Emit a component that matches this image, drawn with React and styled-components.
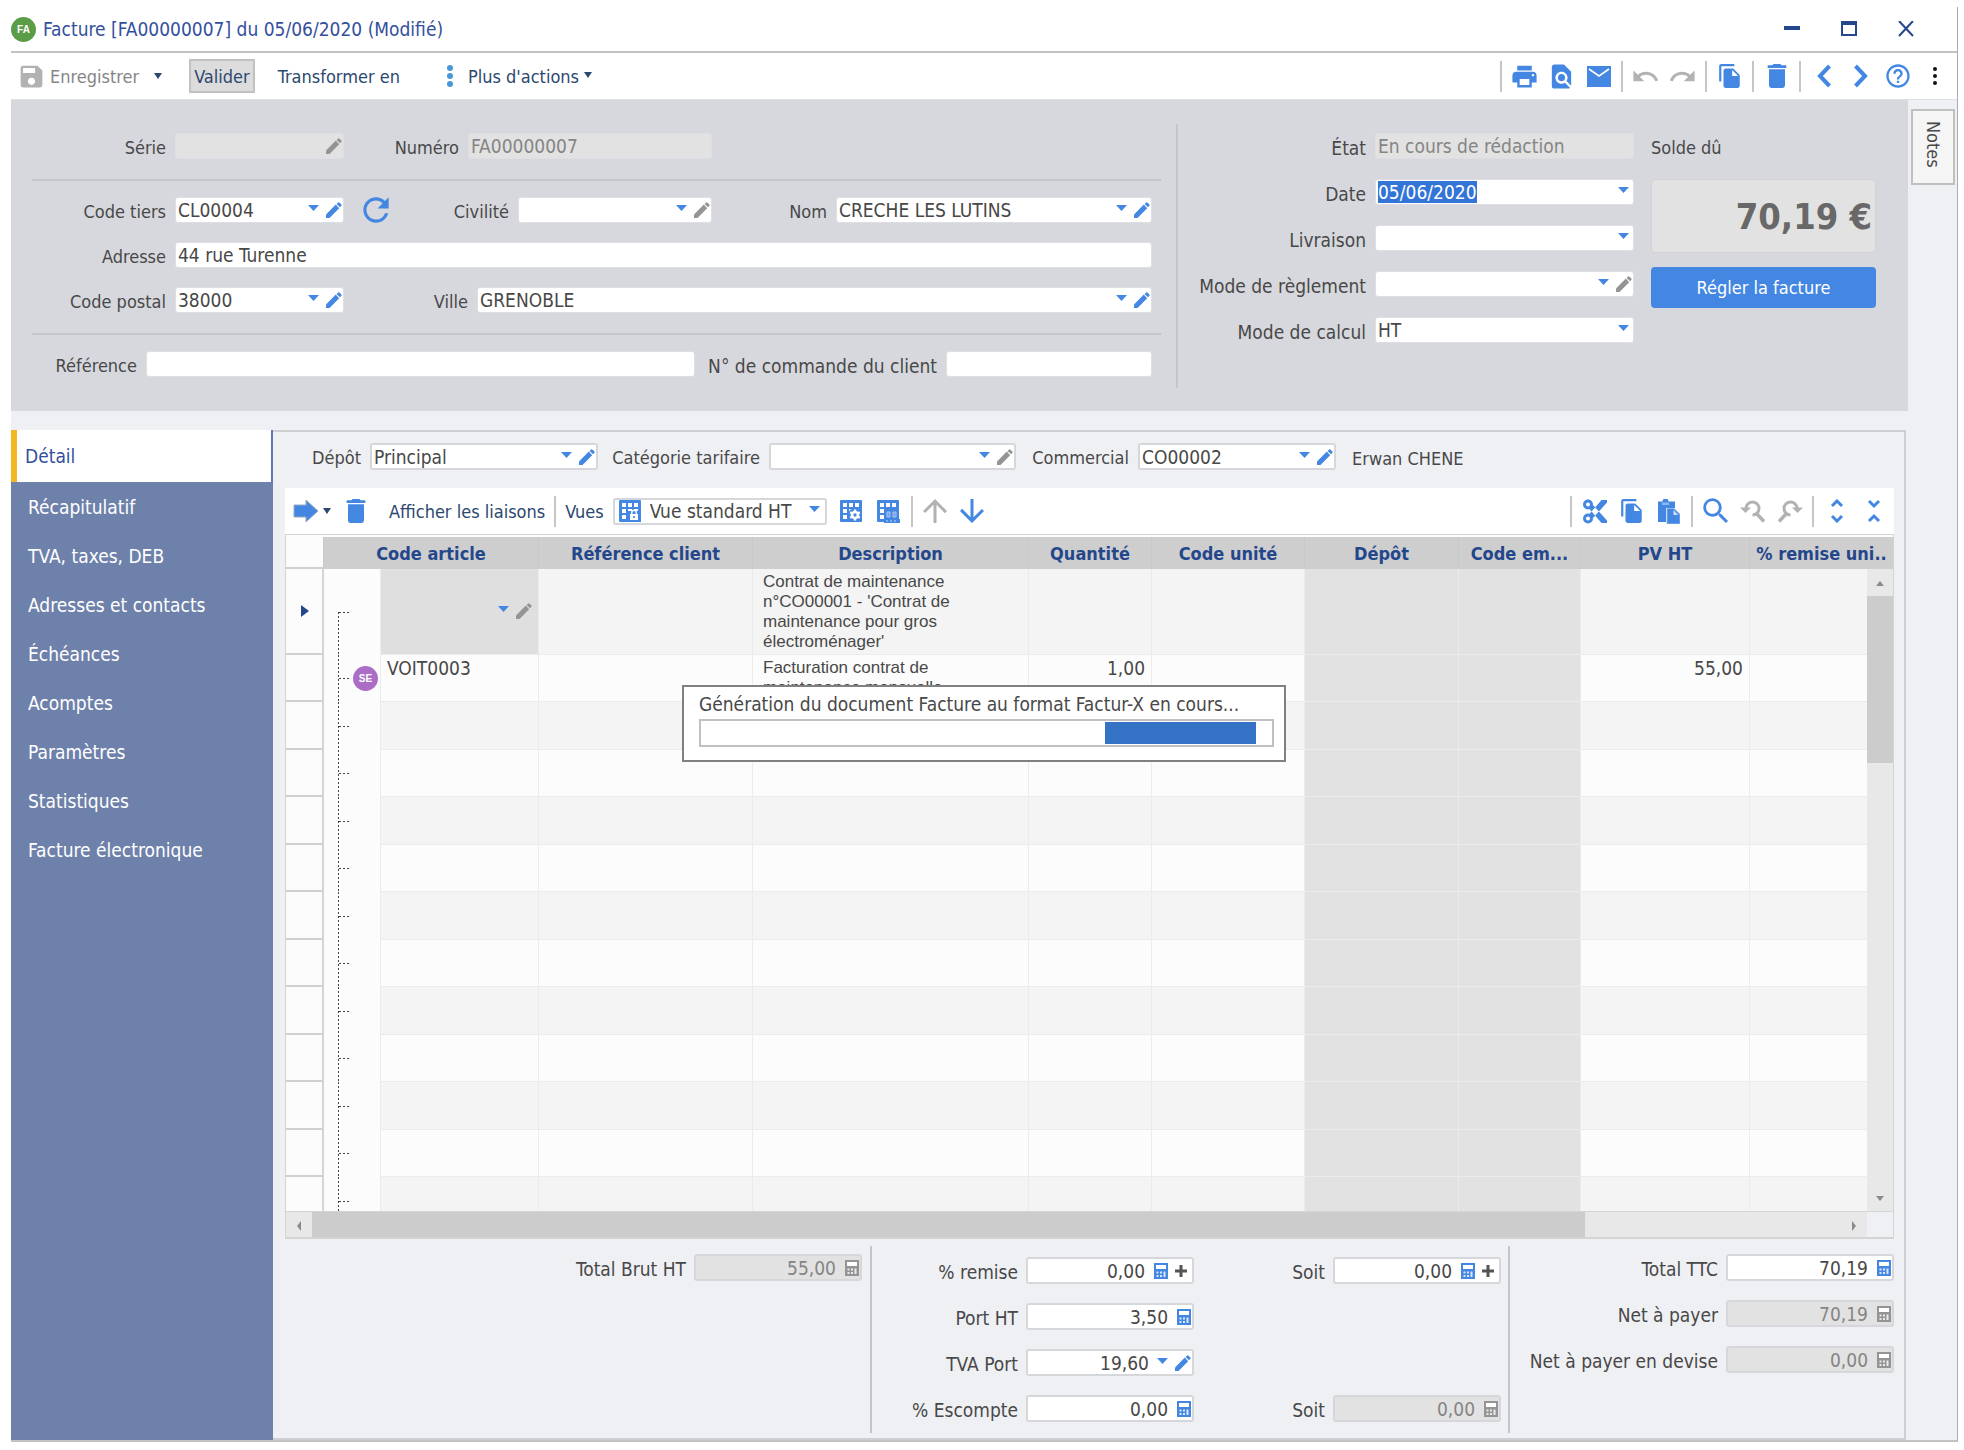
import React, { useEffect, useId, useRef } from 'react';
import styled, { createGlobalStyle, css } from 'styled-components';
import {
  MdArrowDownward,
  MdArrowUpward,
  MdDelete,
  MdFileCopy,
  MdFindInPage,
  MdHelpOutline,
  MdPrint,
  MdRedo,
  MdRefresh,
  MdSave,
  MdSearch,
  MdUndo,
} from 'react-icons/md';

const c = {
  blue: '#4487e2',
  navy: '#24478c',
  ink: '#2b4870',
  text: '#484848',
  muted: '#858585',
  off: '#b2b2b2',
  line: '#c4c5c8',
  panel: '#d7d8dd',
  page: '#eff0f4',
  disabled: '#e2e2e2',
  side: '#6e81aa',
};

const Global = createGlobalStyle`
  *, *::before, *::after { box-sizing: border-box; }
  body { margin: 0; background: #fff; }
  body, input, select, button {
    font-family: "DejaVu Sans Condensed", "DejaVu Sans", Tahoma, sans-serif;
    font-size: 18px;
    color: ${c.text};
  }
  button { border: 0; padding: 0; background: none; cursor: pointer; }
  svg { display: block; flex: none; }
`;

/* ---------- window frame ---------- */

const Screen = styled.div`
  display: flex;
  height: 100vh;
  min-height: 1100px;
  min-width: 1700px;
  padding: 7px 6px 8px 11px;
`;

const Frame = styled.main`
  position: relative;
  flex: 1;
  min-width: 0;
  display: flex;
  flex-direction: column;
  border-right: 1px solid #a9abb2;
  border-bottom: 2px solid #c2c3c6;
`;

const TitleBar = styled.header`
  display: flex;
  align-items: center;
  height: 46px;
  padding-right: 34px;
  border-bottom: 2px solid #c2c2c2;
`;

const Title = styled.h1`
  flex: 1;
  margin: 0 0 0 7px;
  font-size: 19px;
  font-weight: normal;
  color: #33509e;
`;

const Badge = styled.span`
  display: flex;
  align-items: center;
  justify-content: center;
  width: 25px;
  height: 25px;
  border-radius: 50%;
  background: ${(p) => p.$tone};
  color: #fff;
  font: bold 10px "Liberation Sans", Arial, sans-serif;
`;

const WindowButton = styled.button`
  display: flex;
  align-items: center;
  justify-content: center;
  width: 57px;
  height: 40px;
  &:last-child { width: 34px; margin-left: 12px; }
`;

const Toolbar = styled.div`
  display: flex;
  align-items: center;
  height: 47px;
  padding: 0 4px 0 6px;
  border-bottom: 1px solid #e0e1e4;
`;

const ToolText = styled.button`
  display: flex;
  align-items: center;
  gap: ${(p) => p.$gap || 7}px;
  height: 34px;
  margin-left: ${(p) => p.$before || 0}px;
  margin-right: ${(p) => p.$after || 0}px;
  color: ${(p) => (p.$off ? c.muted : c.ink)};
  white-space: nowrap;
  ${(p) =>
    p.$pressed &&
    css`
      padding: 0 3px;
      border: 2px solid #c1c1c1;
      background: #dcdcdc;
    `}
`;

const Grow = styled.div`
  flex: 1;
`;

const IconButton = styled.button`
  display: flex;
  align-items: center;
  justify-content: center;
  width: 37px;
  height: 34px;
  color: ${(p) => (p.$off ? c.off : c.blue)};
`;

const Separator = styled.span`
  width: 2px;
  height: 31px;
  margin: 0 4px;
  background: #c6c6c6;
`;

/* ---------- form pieces ---------- */

const Label = styled.label`
  flex: none;
  width: ${(p) => (p.$w ? `${p.$w}px` : 'auto')};
  padding-top: 3px;
  font-size: ${(p) => (p.$big ? 19 : 18)}px;
  line-height: 24px;
  text-align: right;
  white-space: nowrap;
`;

const Box = styled.span`
  display: flex;
  align-items: center;
  flex: ${(p) => (p.$w ? 'none' : '1')};
  width: ${(p) => (p.$w ? `${p.$w}px` : 'auto')};
  min-width: 0;
  height: ${(p) => (p.$outlined ? 27 : 26)}px;
  padding-right: 1px;
  border: ${(p) => (p.$outlined ? 2 : 1)}px solid ${(p) => (p.$outlined ? '#d6d7da' : '#dedfe2')};
  border-radius: 3px;
  background: ${(p) => (p.$off ? c.disabled : '#fff')};
`;

const control = css`
  flex: 1;
  min-width: 0;
  width: 0;
  height: 22px;
  padding: 0 0 0 2px;
  border: 0;
  outline: 0;
  background: transparent;
  font-size: 19px;
  line-height: 22px;
  color: ${(p) => (p.disabled ? c.muted : c.text)};
  opacity: 1;
`;

const Input = styled.input`
  ${control}
  text-align: ${(p) => (p.$num ? 'right' : 'left')};
  &::selection { background: #3375d7; color: #fff; }
`;

const Select = styled.select`
  ${control}
  appearance: none;
`;

const MiniButton = styled.button`
  display: flex;
  align-items: center;
  justify-content: center;
  width: 17px;
  height: 20px;
  margin-left: 3px;
  color: ${(p) => (p.$off ? '#949494' : c.blue)};
`;

const CalcButton = styled(MiniButton)`
  justify-content: flex-end;
  width: 20px;
`;

const Caret = ({ color = c.blue, w = 11, h = 6 }) => (
  <svg width={w} height={h} viewBox="0 0 10 6" preserveAspectRatio="none" fill={color} aria-hidden="true">
    <path d="M0 0h10L5 6z" />
  </svg>
);

const CaretHolder = styled.span`
  display: flex;
  justify-content: center;
  width: 18px;
  margin-left: ${(p) => (p.$num ? 4 : 0)}px;
  padding-bottom: 4px;
`;

const SmallCaret = styled.span`
  display: flex;
  padding: 0 0 2px 5px;
`;

const Pencil = () => (
  <svg width="16" height="16" viewBox="0 0 16 16" fill="currentColor">
    <path d="M0 16v-3.500L9.800 2.600l3.400 3.600L3.500 16z" />
    <path d="M10.600 1.900l1.200-1.200q.9-.9 1.800 0L15.200 2.300q.9.900 0 1.800L14 5.300z" />
  </svg>
);

const Calculator = () => (
  <svg width="14" height="16" viewBox="0 0 14 16">
    <path d="M0 0h14v16H0z" fill="currentColor" />
    <path d="M2 2h10v4H2z" fill="#fff" />
    <path d="M2.500 8.500h2v2h-2zM6 8.500h2v2H6zM2.500 12h2v2h-2zM6 12h2v2H6zM9.500 8.500h2V14h-2z" fill="#fff" opacity="0.800" />
  </svg>
);

const Plus = () => (
  <svg width="14" height="14" viewBox="0 0 14 14" fill="none" stroke="#555" strokeWidth="3">
    <path d="M7 1v12M1 7h12" />
  </svg>
);

/* A labelled control: text box, list, or amount, with its little buttons. */
function Field({ label, lw, w, big, value = '', list, date, edit, editOff, calc, plus, caret, off, outlined }) {
  const id = useId();
  const ref = useRef(null);
  useEffect(() => {
    if (date && ref.current) {
      ref.current.focus();
      ref.current.select();
    }
  }, [date]);
  return (
    <>
      <Label htmlFor={id} $w={lw} $big={big}>
        {label}
      </Label>
      <Box $w={w} $off={off} $outlined={outlined}>
        {list ? (
          <Select id={id} disabled={off} defaultValue={value}>
            <option value={value}>{value}</option>
          </Select>
        ) : (
          <Input id={id} ref={ref} disabled={off} defaultValue={value} $num={calc || caret} />
        )}
        {(list || date || caret) && !off && (
          <CaretHolder $num={caret}>
            <Caret />
          </CaretHolder>
        )}
        {edit && (
          <MiniButton $off={editOff} aria-label={`Modifier ${label}`}>
            <Pencil />
          </MiniButton>
        )}
        {calc && (
          <CalcButton $off={off} aria-label={`Calculer ${label}`}>
            <Calculator />
          </CalcButton>
        )}
        {plus && (
          <PlusButton aria-label={`Ajouter ${label}`}>
            <Plus />
          </PlusButton>
        )}
      </Box>
    </>
  );
}

const PlusButton = styled(MiniButton)`
  width: 20px;
`;

/* ---------- document header ---------- */

const Content = styled.div`
  flex: 1;
  min-height: 0;
  display: flex;
  background: ${c.page};
`;

const Main = styled.div`
  flex: 1;
  min-width: 0;
  display: flex;
  flex-direction: column;
  gap: 19px;
`;

const Notes = styled.aside`
  width: 49px;
  padding: 9px 2px 0 3px;
`;

const NotesTab = styled.button`
  display: flex;
  align-items: center;
  width: 44px;
  height: 76px;
  padding: 10px 8px;
  border: 2px solid #c0c0c0;
  background: #f5f5f5;
  writing-mode: vertical-rl;
`;

const Head = styled.section`
  display: flex;
  padding: 24px 32px 23px 21px;
  background: ${c.panel};
`;

const Identity = styled.div`
  flex: 1;
  min-width: 0;
  padding: 9px 0 11px;
`;

const Rule = styled.hr`
  height: 2px;
  margin: 20px 0 16px;
  border: 0;
  background: ${c.line};
`;

const Rows = styled.div`
  display: flex;
  flex-direction: column;
  gap: 19px;
  padding-right: 9px;
`;

const Row = styled.div`
  display: flex;
  align-items: center;
  gap: 9px;
  height: 26px;
`;

const Refresh = styled(IconButton)`
  width: 46px;
`;

const Divider = styled.div`
  flex: none;
  width: 2px;
  margin-left: ${(p) => p.$before || 0}px;
  background: ${c.line};
`;

const Status = styled.div`
  display: flex;
  gap: 17px;
  padding-top: 9px;
`;

const StatusRows = styled.div`
  display: flex;
  flex-direction: column;
  gap: 20px;
  width: 456px;
`;

const Balance = styled.div`
  width: 225px;
  display: flex;
  flex-direction: column;
`;

const BalanceLabel = styled.span`
  height: 46px;
  padding-top: 3px;
  line-height: 24px;
`;

const Amount = styled.output`
  display: flex;
  align-items: center;
  justify-content: flex-end;
  height: 74px;
  padding-right: 3px;
  border: 1px solid #d2d2d4;
  border-radius: 4px;
  background: ${c.disabled};
  font-size: 36px;
  font-weight: bold;
  color: #686868;
`;

const PayButton = styled.button`
  height: 41px;
  margin-top: 14px;
  border-radius: 4px;
  background: ${c.blue};
  color: #fff;
`;

/* ---------- body ---------- */

const Body = styled.div`
  flex: 1;
  min-height: 0;
  display: flex;
  margin-right: 2px;
`;

const Side = styled.nav`
  flex: none;
  width: 262px;
  background: ${c.side};
`;

const SideLink = styled.a`
  display: flex;
  align-items: center;
  height: 49px;
  padding-left: 17px;
  font-size: 19px;
  color: #fff;
  text-decoration: none;
  ${(p) =>
    p.$active &&
    css`
      height: 52px;
      padding-left: 8px;
      border-left: 6px solid #f0b823;
      border-right: 2px solid #5d78b3;
      background: #fff;
      color: #33509e;
    `}
`;

const Panel = styled.section`
  flex: 1;
  min-width: 0;
  display: flex;
  flex-direction: column;
  padding: 11px 10px 5px 12px;
  border: 2px solid #cdced1;
  border-left: 0;
`;

const Filters = styled(Row)`
  height: 27px;
  margin-bottom: 18px;
`;

const Agent = styled.span`
  padding: 3px 0 0 7px;
`;

const GridTools = styled.div`
  display: flex;
  align-items: center;
  height: 46px;
  padding: 0 2px 0 8px;
  background: #fff;
`;

const LinkButton = styled(ToolText)`
  margin: 0 5px 0 15px;
`;

const ViewLabel = styled.label`
  margin-left: 5px;
  color: ${c.ink};
`;

const ViewBox = styled(Box)`
  gap: 6px;
  margin: 0 6px 0 9px;
  padding-left: 4px;
`;

const Sheet = styled.div`
  position: relative;
  flex: 1;
  min-height: 200px;
  overflow: hidden;
  padding-top: 2px;
  border: 1px solid #d3d4d6;
  border-bottom: 0;
  background: #fcfcfc;
`;

const Table = styled.table`
  width: 100%;
  table-layout: fixed;
  border-collapse: separate;
  border-spacing: 0;
`;

const Th = styled.th`
  height: 32px;
  padding: 0 4px;
  overflow: hidden;
  border-right: 1px solid #c9c9c9;
  background: ${(p) => (p.$blank ? '#fcfcfc' : '#cecece')};
  border-bottom: ${(p) => (p.$blank ? '2px solid #cfd0d2' : '0')};
  color: ${c.navy};
  font-weight: bold;
  white-space: nowrap;
`;

const Tr = styled.tr`
  & > td {
    height: 47px;
    background: #f4f4f4;
  }
  &:nth-child(odd) > td { height: 48px; }
  &:nth-child(even) > td {
    background: #fcfcfc;
  }
  &:first-child > td { height: 86px; }
  &:nth-child(n) > td.shade { background: ${c.disabled}; }
  &:first-child > td.current { background: #dfdfdf; }
`;

const Td = styled.td`
  padding: 2px 6px;
  overflow: hidden;
  vertical-align: top;
  border-right: 1px solid #ececec;
  border-bottom: 1px solid #ececec;
  font-size: 19px;
  line-height: 22px;
  text-align: ${(p) => (p.$num ? 'right' : 'left')};
`;

const Description = styled(Td)`
  padding: 3px 10px 0;
  font: 17px/20px "Liberation Sans", Arial, sans-serif;
`;

const Handle = styled(Td)`
  padding: 0 0 0 15px;
  vertical-align: middle;
  border-right: 2px solid #d4d5d8;
  border-bottom: 2px solid #cfd0d2;
  ${Tr}:nth-child(n) > & { background: #fcfcfc; }
`;

const Tree = styled(Td)`
  padding: 0 0 0 29px;
  vertical-align: middle;
  border-bottom: 0;
  ${Tr}:nth-child(n) > & {
    background:
      repeating-linear-gradient(to right, #444 0 2px, transparent 2px 4px) 15px 50% / 12px 1px no-repeat,
      repeating-linear-gradient(to bottom, #444 0 2px, transparent 2px 4px) 14px 100% / 1px ${(p) => (p.$first ? '50%' : '100%')} no-repeat,
      #fcfcfc;
  }
`;

const CellTools = styled.div`
  display: flex;
  align-items: center;
  justify-content: flex-end;
  height: 80px;
`;

const VScroll = styled.div`
  position: absolute;
  top: 34px;
  right: 0;
  bottom: 0;
  display: flex;
  flex-direction: column;
  width: 26px;
  background: #e8e8e8;
`;

const HScroll = styled.div`
  display: flex;
  flex: none;
  height: 28px;
  border: 1px solid #d3d4d6;
  border-bottom-width: 2px;
  padding-right: 26px;
  background: linear-gradient(#e8e8e8, #e8e8e8) content-box;
`;

const ScrollButton = styled.button`
  display: flex;
  align-items: center;
  justify-content: center;
  width: 26px;
  height: 27px;
`;

const Thumb = styled.div`
  flex: 0 0 ${(p) => p.$size};
  background: #cccccc;
`;

/* ---------- totals ---------- */

const Totals = styled.section`
  display: flex;
  margin-top: 7px;
`;

const TotalsPart = styled.div`
  display: flex;
  flex-direction: column;
  flex: ${(p) => (p.$w ? 'none' : '1')};
  width: ${(p) => (p.$w ? `${p.$w}px` : 'auto')};
  gap: 19px;
  padding: ${(p) => p.$top}px ${(p) => p.$end || 0}px ${(p) => p.$top}px 0;
`;

const TotalsRow = styled(Row)`
  justify-content: ${(p) => (p.$start ? 'flex-start' : 'flex-end')};
  gap: 8px;
  height: 27px;
`;

/* ---------- progress box ---------- */

const Progress = styled.div`
  position: absolute;
  inset: 0;
  margin: auto;
  width: 604px;
  height: 77px;
  padding: 6px 10px 0 15px;
  border: 2px solid #808080;
  background: #fff;
`;

const ProgressText = styled.p`
  margin: 0 0 4px;
  font-size: 19px;
  line-height: 22px;
  white-space: nowrap;
`;

const Track = styled.div`
  height: 28px;
  padding: 1px;
  border: 2px solid #c0c0c0;
`;

const Chunk = styled.div`
  width: 151px;
  height: 22px;
  margin-left: 70.8%;
  background: #3472c6;
`;

/* ---------- drawings ---------- */

const Stroke = ({ w = 24, h = 24, d, sw = 4 }) => (
  <svg width={w} height={h} viewBox={`0 0 ${w} ${h}`} fill="none" stroke="currentColor" strokeWidth={sw}>
    <path d={d} />
  </svg>
);

const Dots = ({ color, r = 2, step = 8 }) => (
  <svg width="6" height="22" viewBox="0 0 6 22" fill={color}>
    <circle cx="3" cy={11 - step} r={r} />
    <circle cx="3" cy="11" r={r} />
    <circle cx="3" cy={11 + step} r={r} />
  </svg>
);

const gridCells = [3, 9, 15].flatMap((y) => [3, 9, 15].map((x) => [x, y]));

const GridIcon = ({ kind }) => (
  <svg width="23" height="23" viewBox="0 0 23 23">
    <rect width="22" height="22" rx="1" fill={c.blue} />
    {gridCells.map(([x, y]) => (
      <rect key={`${x}-${y}`} x={x} y={y} width="4" height="4" fill="#fff" />
    ))}
    {kind === 'lock' && (
      <g>
        <path d="M9 11h13v11H9z" fill={c.blue} />
        <rect x="11" y="14" width="8" height="6" fill="#fff" />
        <path d="M12.800 14v-1.500a2.200 2.200 0 0 1 4.400 0V14" fill="none" stroke="#fff" strokeWidth="1.400" />
        <circle cx="15" cy="17" r="1.100" fill={c.blue} />
      </g>
    )}
    {kind === 'gear' && (
      <g>
        <circle cx="15" cy="15" r="7" fill={c.blue} />
        <circle cx="15" cy="15" r="3" fill="none" stroke="#fff" strokeWidth="2.600" />
        <path
          d="M15 9.500v2M15 18.500v2M10.200 12.200l1.800 1M18 16.800l1.800 1M10.200 17.800l1.800-1M18 13.200l1.800-1"
          stroke="#fff"
          strokeWidth="2.400"
        />
      </g>
    )}
    {kind === 'find' && (
      <g>
        <rect x="8" y="9" width="14" height="13" fill={c.blue} />
        <path d="M10 12v5h3v-5zM16 12v5h3v-5z" fill="#6fa3ea" stroke="#a9c8f3" strokeWidth="1" />
        <path d="M7 19h16v4H7z" fill={c.blue} />
        <path d="M10 20v2M14 20v2M18 20v2" stroke="#a9c8f3" strokeWidth="1.200" />
      </g>
    )}
  </svg>
);

const Mail = () => (
  <svg width="24" height="21" viewBox="0 0 24 21">
    <path d="M0 0h24v21H0z" fill="currentColor" />
    <path d="M2 3l10 7 10-7" fill="none" stroke="#fff" strokeWidth="1.600" />
  </svg>
);

const Scissors = () => (
  <svg width="24" height="25" viewBox="0 0 24 25" fill="currentColor">
    <circle cx="5" cy="5.500" r="3.500" fill="none" stroke="currentColor" strokeWidth="3" />
    <circle cx="5" cy="19.500" r="3.500" fill="none" stroke="currentColor" strokeWidth="3" />
    <path d="M6 9.500L10 6l14 15.500V24h-5.500zM6 15.500l4 3.500L24 3.500V1h-5.500z" />
  </svg>
);

const Paste = () => (
  <svg width="22" height="25" viewBox="0 0 22 25">
    <path d="M0 2.500h4.500a3 3 0 0 1 6 0H17V9H8v14H0z" fill={c.blue} />
    <path d="M4 3.500h7V6H4z" fill="#8db6ee" />
    <path d="M9 9.500h7l6 6V25H9z" fill={c.blue} stroke="#8db6ee" strokeWidth="1" />
    <path d="M15.500 11v5H20z" fill="#cfe0f8" />
  </svg>
);

const ArrowBlock = () => (
  <svg width="26" height="24" viewBox="0 0 26 24">
    <path d="M1 6h12V1l12 11-12 11v-5H1z" fill={c.blue} stroke="#9ba9bf" strokeWidth="1" />
  </svg>
);

const FindTurn = ({ flip }) => (
  <svg width="26" height="26" viewBox="0 0 26 26" fill="none" stroke="currentColor" strokeWidth="3">
    <g transform={flip ? 'translate(26 0) scale(-1 1)' : undefined}>
      <path d="M6 10a6.500 6.500 0 1 1 6.500 7" />
      <path d="M16.500 15.500l7.500 8" strokeWidth="3.500" />
      <path d="M0 9.500h11L5.500 15z" fill="currentColor" stroke="none" />
    </g>
  </svg>
);

const Triangle = ({ d, color = '#8a8a8a' }) => (
  <svg width="8" height="12" viewBox="0 0 8 12" fill={color}>
    <path d={d} />
  </svg>
);

/* ---------- data ---------- */

const menu = [
  'Détail',
  'Récapitulatif',
  'TVA, taxes, DEB',
  'Adresses et contacts',
  'Échéances',
  'Acomptes',
  'Paramètres',
  'Statistiques',
  'Facture électronique',
];

const widths = [38, 57, 158, 214, 276, 123, 153, 154, 122, 169, 144];

const headings = [
  'Référence client',
  'Description',
  'Quantité',
  'Code unité',
  'Dépôt',
  'Code em...',
  'PV HT',
  '% remise uni..',
];

const lines = [
  { text: "Contrat de maintenance n°CO00001 - 'Contrat de maintenance pour gros électroménager'" },
  { code: 'VOIT0003', kind: 'SE', text: 'Facturation contrat de maintenance mensuelle', qty: '1,00', price: '55,00' },
  ...Array.from({ length: 11 }, () => ({})),
];

/* ---------- sections ---------- */

function MainToolbar() {
  return (
    <Toolbar>
      <ToolText $off $gap={4} disabled>
        <MdSave size={29} color={c.off} />
        Enregistrer
      </ToolText>
      <IconButton aria-label="Options d'enregistrement">
        <Caret color={c.ink} w={8} h={6} />
      </IconButton>
      <ToolText $pressed $before={13} $after={23}>Valider</ToolText>
      <ToolText $after={47}>Transformer en</ToolText>
      <ToolText $gap={15}>
        <Dots color="#4a96d8" r={3} />
        Plus d'actions
      </ToolText>
      <SmallCaret>
        <Caret color={c.ink} w={8} h={6} />
      </SmallCaret>
      <Grow />
      <Separator />
      <IconButton aria-label="Imprimer"><MdPrint size={29} /></IconButton>
      <IconButton aria-label="Aperçu"><MdFindInPage size={29} /></IconButton>
      <IconButton aria-label="Envoyer"><Mail /></IconButton>
      <Separator />
      <IconButton $off aria-label="Annuler"><MdUndo size={29} /></IconButton>
      <IconButton $off aria-label="Rétablir"><MdRedo size={29} /></IconButton>
      <Separator />
      <IconButton aria-label="Dupliquer"><MdFileCopy size={26} /></IconButton>
      <Separator />
      <IconButton aria-label="Supprimer"><MdDelete size={32} /></IconButton>
      <Separator />
      <IconButton aria-label="Précédent"><Stroke w={16} d="M13.500 2L4 12l9.500 10" /></IconButton>
      <IconButton aria-label="Suivant"><Stroke w={16} d="M2.500 2L12 12 2.500 22" /></IconButton>
      <IconButton aria-label="Aide"><MdHelpOutline size={28} /></IconButton>
      <IconButton aria-label="Plus"><Dots color="#111" step={7} /></IconButton>
    </Toolbar>
  );
}

function DocumentHead() {
  return (
    <Head>
      <Identity>
        <Rows>
          <Row>
            <Field label="Série" lw={134} w={169} off edit editOff />
            <Field label="Numéro" lw={106} w={244} value="FA00000007" off />
          </Row>
        </Rows>
        <Rule />
        <Rows>
          <Row>
            <Field label="Code tiers" lw={134} w={169} value="CL00004" list edit />
            <Refresh aria-label="Actualiser"><MdRefresh size={38} /></Refresh>
            <Field label="Civilité" lw={101} w={194} list edit editOff />
            <Field label="Nom" lw={106} value="CRECHE LES LUTINS" list edit />
          </Row>
          <Row>
            <Field label="Adresse" lw={134} value="44 rue Turenne" />
          </Row>
          <Row>
            <Field label="Code postal" lw={134} w={169} value="38000" list edit />
            <Field label="Ville" lw={115} value="GRENOBLE" list edit />
          </Row>
        </Rows>
        <Rule />
        <Rows>
          <Row>
            <Field label="Référence" lw={105} />
            <Field label="N° de commande du client" big lw={233} w={206} />
          </Row>
        </Rows>
      </Identity>
      <Divider $before={15} />
      <Status>
        <StatusRows>
          <Row><Field label="État" big lw={188} value="En cours de rédaction" list off /></Row>
          <Row><Field label="Date" big lw={188} value="05/06/2020" date /></Row>
          <Row><Field label="Livraison" big lw={188} list /></Row>
          <Row><Field label="Mode de règlement" big lw={188} list edit editOff /></Row>
          <Row><Field label="Mode de calcul" big lw={188} value="HT" list /></Row>
        </StatusRows>
        <Balance>
          <BalanceLabel>Solde dû</BalanceLabel>
          <Amount>70,19 €</Amount>
          <PayButton>Régler la facture</PayButton>
        </Balance>
      </Status>
    </Head>
  );
}

function GridToolbar() {
  return (
    <GridTools>
      <ToolText $gap={4} $after={6} aria-label="Insérer">
        <ArrowBlock />
        <Caret color={c.ink} w={8} h={6} />
      </ToolText>
      <IconButton aria-label="Supprimer la ligne"><MdDelete size={32} /></IconButton>
      <LinkButton>Afficher les liaisons</LinkButton>
      <Separator />
      <ViewLabel htmlFor="view">Vues</ViewLabel>
      <ViewBox $w={214} $outlined>
        <GridIcon kind="lock" />
        <Select id="view" defaultValue="ht">
          <option value="ht">Vue standard HT</option>
        </Select>
        <CaretHolder><Caret /></CaretHolder>
      </ViewBox>
      <IconButton aria-label="Configurer la vue"><GridIcon kind="gear" /></IconButton>
      <IconButton aria-label="Rechercher une vue"><GridIcon kind="find" /></IconButton>
      <Separator />
      <IconButton $off aria-label="Monter"><MdArrowUpward size={36} /></IconButton>
      <IconButton aria-label="Descendre"><MdArrowDownward size={36} /></IconButton>
      <Grow />
      <Separator />
      <IconButton aria-label="Couper"><Scissors /></IconButton>
      <IconButton aria-label="Copier"><MdFileCopy size={26} /></IconButton>
      <IconButton aria-label="Coller"><Paste /></IconButton>
      <Separator />
      <IconButton aria-label="Rechercher"><MdSearch size={34} /></IconButton>
      <IconButton $off aria-label="Occurrence précédente"><FindTurn /></IconButton>
      <IconButton $off aria-label="Occurrence suivante"><FindTurn flip /></IconButton>
      <Separator />
      <IconButton aria-label="Déplier"><Stroke w={14} sw={3} d="M2 7l5-5 5 5M2 17l5 5 5-5" /></IconButton>
      <IconButton aria-label="Replier"><Stroke w={14} sw={3} d="M2 2l5 5 5-5M2 22l5-5 5 5" /></IconButton>
    </GridTools>
  );
}

function Lines() {
  return (
    <>
      <Sheet>
        <Table>
          <colgroup>
            {widths.map((w, i) => (
              <col key={i} width={w} />
            ))}
          </colgroup>
          <thead>
            <tr>
              <Th $blank />
              <Th colSpan={2}>Code article</Th>
              {headings.map((h) => (
                <Th key={h}>{h}</Th>
              ))}
            </tr>
          </thead>
          <tbody>
            {lines.map((l, i) => (
              <Tr key={i}>
                <Handle>{i === 0 && <Triangle d="M0 0l8 6-8 6z" color={c.navy} />}</Handle>
                <Tree $first={i === 0}>{l.kind && <Badge $tone="#ab6dc6">{l.kind}</Badge>}</Tree>
                <Td className={i === 0 ? 'current' : undefined}>
                  {i === 0 ? (
                    <CellTools>
                      <CaretHolder><Caret /></CaretHolder>
                      <MiniButton $off aria-label="Modifier l'article"><Pencil /></MiniButton>
                    </CellTools>
                  ) : (
                    l.code
                  )}
                </Td>
                <Td />
                <Description>{l.text}</Description>
                <Td $num>{l.qty}</Td>
                <Td />
                <Td className="shade" />
                <Td className="shade" />
                <Td $num>{l.price}</Td>
                <Td />
              </Tr>
            ))}
          </tbody>
        </Table>
        <VScroll>
          <ScrollButton aria-label="Défiler vers le haut"><Triangle d="M0 9h8L4 4z" /></ScrollButton>
          <Thumb $size="26%" />
          <Grow />
          <ScrollButton aria-label="Défiler vers le bas"><Triangle d="M0 4h8L4 9z" /></ScrollButton>
        </VScroll>
      </Sheet>
      <HScroll>
        <ScrollButton aria-label="Défiler à gauche"><Triangle d="M6 1v10L2 6z" /></ScrollButton>
        <Thumb $size="80.5%" />
        <Grow />
        <ScrollButton aria-label="Défiler à droite"><Triangle d="M2 1v10l4-5z" /></ScrollButton>
      </HScroll>
    </>
  );
}

function TotalsBar() {
  const amount = { w: 168, big: true, outlined: true };
  return (
    <Totals>
      <TotalsPart $top={8} $end={8}>
        <TotalsRow><Field {...amount} label="Total Brut HT" value="55,00" calc off /></TotalsRow>
      </TotalsPart>
      <Divider />
      <TotalsPart $w={636} $top={11}>
        <TotalsRow $start>
          <Field {...amount} lw={146} label="% remise" value="0,00" calc plus />
          <Field {...amount} lw={123} label="Soit" value="0,00" calc plus />
        </TotalsRow>
        <TotalsRow $start><Field {...amount} lw={146} label="Port HT" value="3,50" calc /></TotalsRow>
        <TotalsRow $start><Field {...amount} lw={146} label="TVA Port" value="19,60" caret edit /></TotalsRow>
        <TotalsRow $start>
          <Field {...amount} lw={146} label="% Escompte" value="0,00" calc />
          <Field {...amount} lw={123} label="Soit" value="0,00" calc off />
        </TotalsRow>
      </TotalsPart>
      <Divider />
      <TotalsPart $w={384} $top={8}>
        <TotalsRow><Field {...amount} label="Total TTC" value="70,19" calc /></TotalsRow>
        <TotalsRow><Field {...amount} label="Net à payer" value="70,19" calc off /></TotalsRow>
        <TotalsRow><Field {...amount} label="Net à payer en devise" value="0,00" calc off /></TotalsRow>
      </TotalsPart>
    </Totals>
  );
}

export default function App() {
  return (
    <Screen>
      <Global />
      <Frame>
        <TitleBar>
          <Badge $tone="#5b9c47">FA</Badge>
          <Title>Facture [FA00000007] du 05/06/2020 (Modifié)</Title>
          <WindowButton aria-label="Réduire">
            <svg width="16" height="16" fill={c.navy}><path d="M0 5h16v4H0z" /></svg>
          </WindowButton>
          <WindowButton aria-label="Agrandir">
            <svg width="16" height="16" fill={c.navy}><path fillRule="evenodd" d="M0 0h16v15H0zM2 4v9h12V4z" /></svg>
          </WindowButton>
          <WindowButton aria-label="Fermer">
            <svg width="16" height="16" fill="none" stroke={c.navy} strokeWidth="2"><path d="M1 0l14 15M15 0L1 15" /></svg>
          </WindowButton>
        </TitleBar>
        <MainToolbar />
        <Content>
          <Main>
            <DocumentHead />
            <Body>
              <Side>
                {menu.map((item, i) => (
                  <SideLink key={item} href="#" $active={i === 0}>{item}</SideLink>
                ))}
              </Side>
              <Panel>
                <Filters>
                  <Field outlined label="Dépôt" lw={76} w={228} value="Principal" list edit />
                  <Field outlined label="Catégorie tarifaire" lw={153} w={247} list edit editOff />
                  <Field outlined label="Commercial" lw={104} w={198} value="CO00002" list edit />
                  <Agent>Erwan CHENE</Agent>
                </Filters>
                <GridToolbar />
                <Lines />
                <TotalsBar />
              </Panel>
            </Body>
          </Main>
          <Notes><NotesTab>Notes</NotesTab></Notes>
        </Content>
        <Progress role="status">
          <ProgressText>Génération du document Facture au format Factur-X en cours...</ProgressText>
          <Track><Chunk /></Track>
        </Progress>
      </Frame>
    </Screen>
  );
}
